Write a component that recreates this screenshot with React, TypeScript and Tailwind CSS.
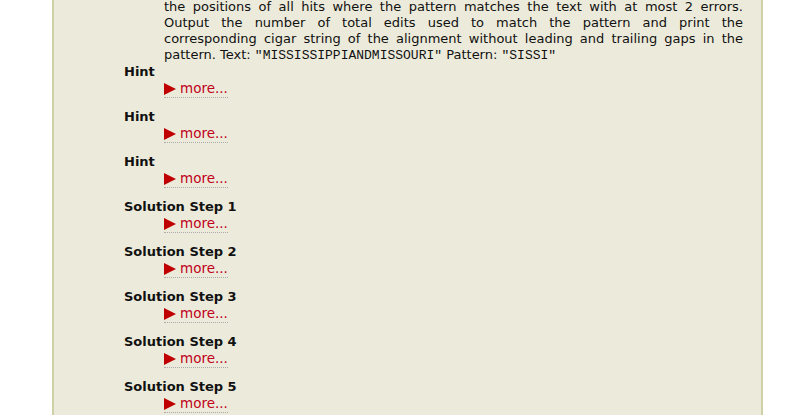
const steps = [
  "Hint",
  "Hint",
  "Hint",
  "Solution Step 1",
  "Solution Step 2",
  "Solution Step 3",
  "Solution Step 4",
  "Solution Step 5",
];

const Mono = ({ children }: { children: React.ReactNode }) => (
  <span className="font-['Liberation_Mono',monospace]">{children}</span>
);

const MoreLink = () => (
  <a className="flex items-center gap-[4px] border-b border-dotted border-[#aaa] h-[18px] text-[#c0001a] cursor-pointer">
    <svg width="12" height="12" viewBox="0 0 12 12" className="shrink-0">
      <polygon points="0,0 12,6 0,12" fill="#c00000" />
    </svg>
    <span className="text-[13.5px]">more...</span>
  </a>
);

export default function App() {
  return (
    <div className="min-h-[415px] bg-white font-['DejaVu_Sans',Verdana,sans-serif] text-[13px] text-[#111] overflow-hidden">
      <div className="ml-[52px] w-[711px] h-[415px] bg-[#ecebdb] border-l-2 border-r-2 border-[#cfd0a6] overflow-hidden">
        <div className="pl-[110px] pr-[18px] -mt-[1px] leading-[16px]">
          <p className="text-justify [text-align-last:justify]">
            the positions of all hits where the pattern matches the text with at most 2 errors.
          </p>
          <p className="text-justify [text-align-last:justify]">
            Output the number of total edits used to match the pattern and print the
          </p>
          <p className="text-justify [text-align-last:justify]">
            corresponding cigar string of the alignment without leading and trailing gaps in the
          </p>
          <p>
            pattern. Text: <Mono>"MISSISSIPPIANDMISSOURI"</Mono> Pattern: <Mono>"SISSI"</Mono>
          </p>
        </div>
        <dl className="pl-[70px]">
          {steps.map((s, i) => (
            <div key={i} className="mb-[11px]">
              <dt className="font-bold leading-[16px]">{s}</dt>
              <dd className="pl-[40px] flex">
                <MoreLink />
              </dd>
            </div>
          ))}
        </dl>
      </div>
    </div>
  );
}
